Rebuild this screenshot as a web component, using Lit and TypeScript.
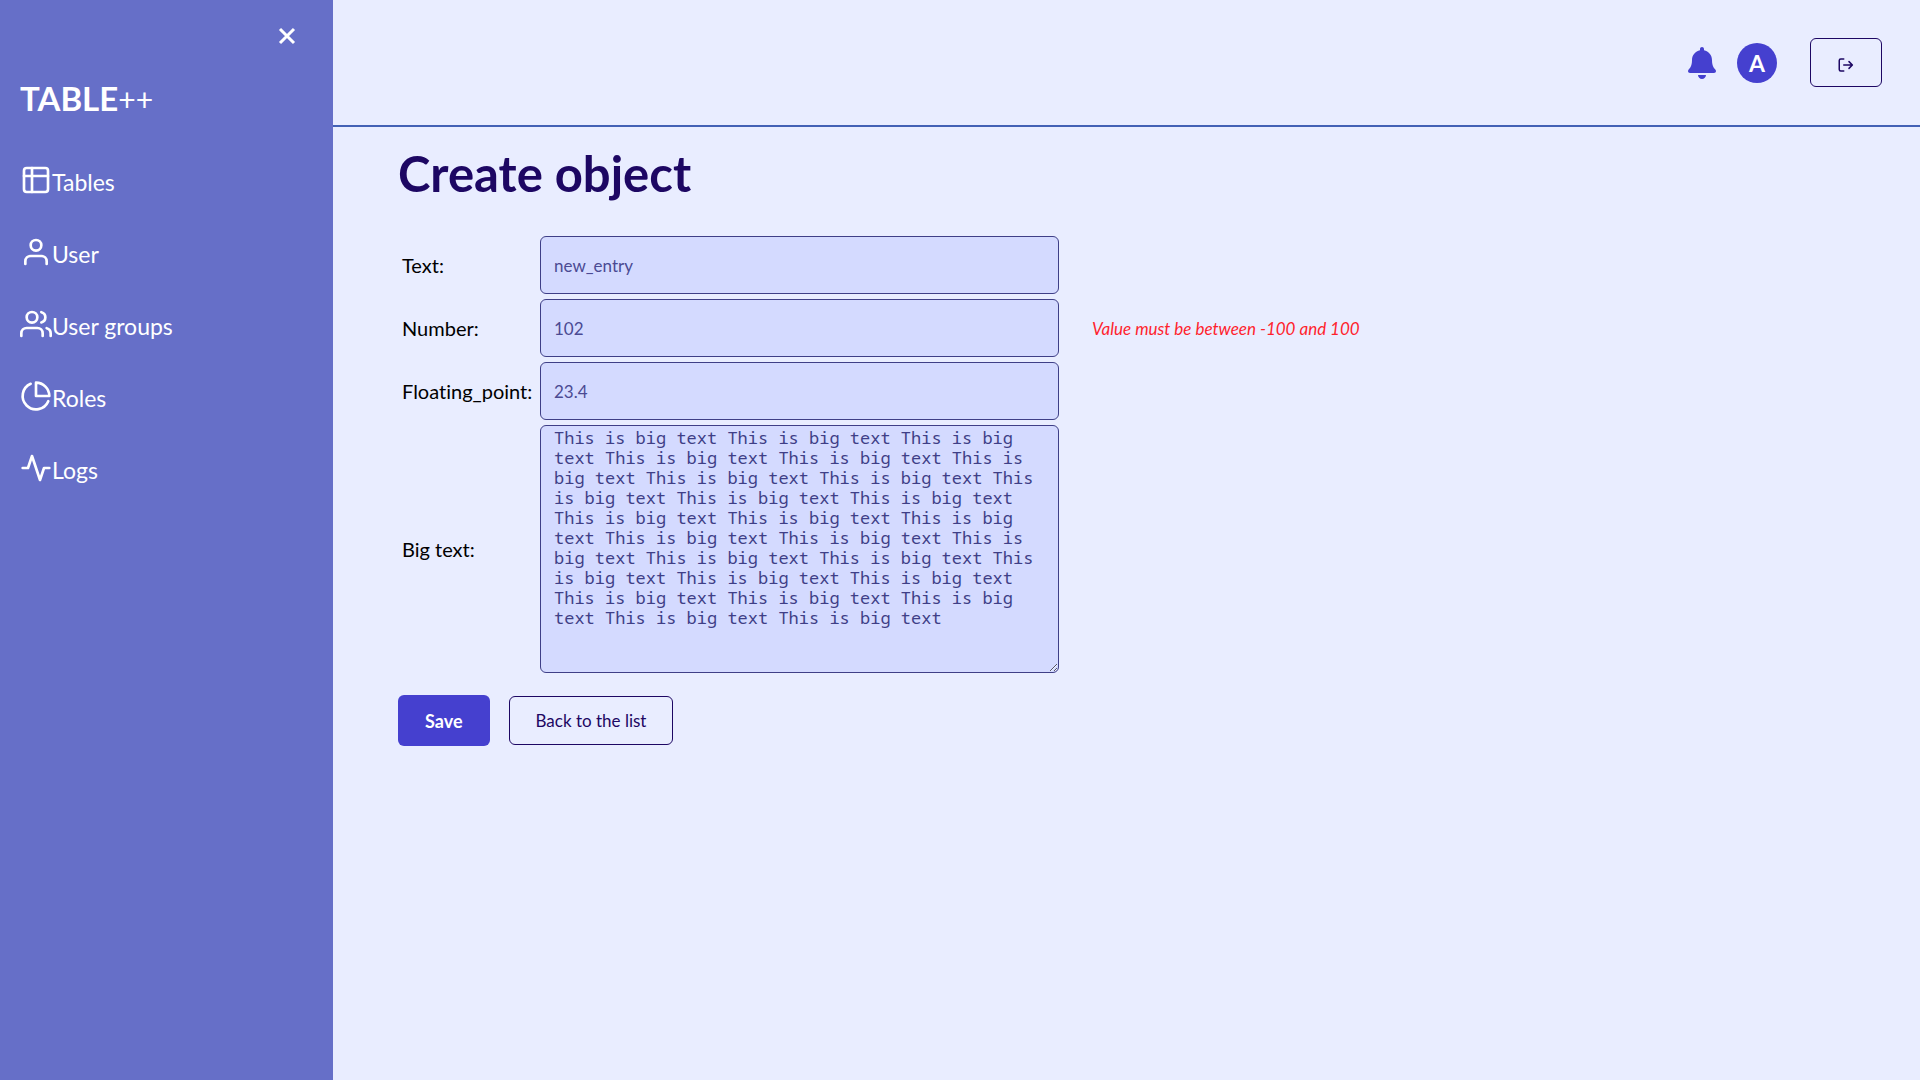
import { LitElement, html, css, svg } from "lit";
import { customElement } from "lit/decorators.js";

const NAV = [
  {
    label: "Tables",
    icon: svg`<rect x="3" y="3" width="18" height="18" rx="2"/><path d="M3 9h18M9 3v18"/>`,
  },
  {
    label: "User",
    icon: svg`<path d="M20 21v-2a4 4 0 0 0-4-4H8a4 4 0 0 0-4 4v2"/><circle cx="12" cy="7" r="4"/>`,
  },
  {
    label: "User groups",
    icon: svg`<path d="M17 21v-2a4 4 0 0 0-4-4H5a4 4 0 0 0-4 4v2"/><circle cx="9" cy="7" r="4"/><path d="M23 21v-2a4 4 0 0 0-3-3.87M16 3.13a4 4 0 0 1 0 7.75"/>`,
  },
  {
    label: "Roles",
    icon: svg`<path d="M21.21 15.89A10 10 0 1 1 8 2.83"/><path d="M22 12A10 10 0 0 0 12 2v10z"/>`,
  },
  { label: "Logs", icon: svg`<path d="M22 12h-4l-3 9L9 3l-3 9H2"/>` },
];

const BIG_TEXT = Array(27).fill("This is big text").join(" ");

@customElement("app-root")
export class AppRoot extends LitElement {
  static styles = css`
    :host {
      display: flex;
      min-height: 100vh;
      background: #e9edff;
      color: #000;
      font-family: Lato, "Open Sans", sans-serif;
      font-size: 20px;
      font-variant-ligatures: none;
    }
    *,
    *::before,
    *::after {
      box-sizing: border-box;
    }
    button,
    input {
      font-family: inherit;
    }
    .sidebar {
      flex: none;
      width: 333px;
      padding: 20px;
      background: #666fc8;
      color: #fff;
      display: flex;
      flex-direction: column;
    }
    .close {
      align-self: flex-end;
      display: flex;
      margin-right: 10px;
      padding: 2px;
      border: 0;
      background: none;
      color: inherit;
      cursor: pointer;
    }
    .close-icon {
      fill: none;
      stroke: currentColor;
      stroke-width: 3;
    }
    .brand {
      margin: 26px 0 0;
      font-size: 33px;
      line-height: 40px;
      font-weight: 700;
    }
    .plus {
      font-weight: 400;
      font-size: 30px;
    }
    .nav {
      display: flex;
      flex-direction: column;
      gap: 36px;
      margin-top: 45px;
    }
    .link {
      display: flex;
      align-items: flex-start;
      color: inherit;
      text-decoration: none;
      font-size: 23px;
      line-height: 36px;
    }
    .line-icon {
      fill: none;
      stroke: currentColor;
      stroke-width: 2;
      stroke-linecap: round;
      stroke-linejoin: round;
    }
    .page {
      flex: 1;
      min-width: 0;
    }
    .header {
      display: flex;
      align-items: center;
      justify-content: flex-end;
      height: 127px;
      padding: 0 38px;
      border-bottom: 2px solid #4361b5;
    }
    .bell {
      display: flex;
      padding: 0;
      border: 0;
      background: none;
      color: #4540cf;
    }
    .avatar {
      display: grid;
      place-items: center;
      width: 40px;
      height: 40px;
      margin: 0 33px 0 21px;
      border-radius: 50%;
      background: #4540cf;
      color: #fff;
      font-size: 23px;
      font-weight: 700;
    }
    .btn {
      display: inline-flex;
      align-items: center;
      justify-content: center;
      height: 49px;
      padding: 0 26px;
      border: 1px solid #1d0763;
      border-radius: 6px;
      background: transparent;
      color: #1d0763;
      font-size: 17px;
      text-decoration: none;
      cursor: pointer;
    }
    .logout {
      width: 72px;
      padding: 4px 0 0;
    }
    .primary {
      height: 51px;
      padding: 0 27px;
      border: 0;
      background: #4540cf;
      color: #fff;
      font-size: 18px;
      font-weight: 700;
    }
    .content {
      padding: 17px 65px;
    }
    .title {
      margin: 0;
      color: #1d0763;
      font-size: 49px;
      line-height: 58px;
      font-weight: 700;
    }
    .fields {
      display: grid;
      grid-template-columns: 138px minmax(0, 519px) 1fr;
      row-gap: 5px;
      align-items: center;
      margin-top: 34px;
      padding-left: 4px;
    }
    .label {
      grid-column: 1;
    }
    .control {
      grid-column: 2;
      width: 100%;
      border: 1px solid #3f3f87;
      border-radius: 6px;
      background: #d4daff;
      color: #4b4a93;
      padding: 0 13px;
    }
    .input {
      height: 58px;
      font-size: 17px;
    }
    .area {
      display: block;
      height: 248px;
      padding: 2px 13px;
      color: #3f3f87;
      font-family: "Noto Sans Mono", "DejaVu Sans Mono", monospace;
      font-size: 17px;
      line-height: 20px;
    }
    .error {
      grid-column: 3;
      margin-left: 33px;
      color: #ff1f2d;
      font-size: 17px;
      font-style: italic;
    }
    .actions {
      display: flex;
      align-items: center;
      gap: 19px;
      margin-top: 22px;
    }
  `;

  render() {
    return html`
      <aside class="sidebar">
        <button class="close" type="button" aria-label="Close menu">
          <svg class="close-icon" width="28" height="28" viewBox="0 0 28 28">
            <path d="M7 7l14 14M21 7l-14 14" />
          </svg>
        </button>
        <p class="brand">TABLE<span class="plus">++</span></p>
        <nav class="nav">
          ${NAV.map(
            (item) => html`<a class="link" href="#">
              <svg class="line-icon" width="32" height="32" viewBox="0 0 24 24">${item.icon}</svg>
              <span>${item.label}</span>
            </a>`,
          )}
        </nav>
      </aside>
      <div class="page">
        <header class="header">
          <button class="bell" type="button" aria-label="Notifications">
            <svg width="28" height="32" viewBox="0 0 448 512" fill="currentColor">
              <path
                d="M224 512c35.32 0 63.97-28.65 63.97-64H160.03c0 35.35 28.65 64 63.97 64zm215.39-149.71c-19.32-20.76-55.47-51.99-55.47-154.29 0-77.7-54.48-139.9-127.94-155.16V32c0-17.67-14.32-32-31.98-32s-31.98 14.33-31.98 32v20.84C118.56 68.1 64.08 130.3 64.08 208c0 102.3-36.15 133.53-55.47 154.29-6 6.45-8.66 14.16-8.61 21.71.11 16.4 12.98 32 32.1 32h383.8c19.12 0 32-15.6 32.1-32 .05-7.55-2.61-15.27-8.61-21.71z"
              />
            </svg>
          </button>
          <span class="avatar">A</span>
          <button class="btn logout" type="button" aria-label="Log out">
            <svg class="line-icon" width="18" height="18" viewBox="0 0 24 24">
              <path d="M9 20H5a2 2 0 0 1-2-2V6a2 2 0 0 1 2-2h4M16 16.500l4.500-4.500-4.500-4.500M20 12H9" />
            </svg>
          </button>
        </header>
        <main class="content">
          <h1 class="title">Create object</h1>
          <form>
            <div class="fields">
              <label class="label" for="text">Text:</label>
              <input class="control input" id="text" type="text" value="new_entry" />
              <label class="label" for="number">Number:</label>
              <input
                class="control input"
                id="number"
                type="text"
                inputmode="numeric"
                value="102"
                aria-describedby="number-error"
              />
              <span class="error" id="number-error">Value must be between -100 and 100</span>
              <label class="label" for="float">Floating_point:</label>
              <input class="control input" id="float" type="text" inputmode="decimal" value="23.4" />
              <label class="label" for="big">Big text:</label>
              <textarea class="control area" id="big" .value=${BIG_TEXT}></textarea>
            </div>
            <div class="actions">
              <button class="btn primary" type="button">Save</button>
              <a class="btn" href="#">Back to the list</a>
            </div>
          </form>
        </main>
      </div>
    `;
  }
}
